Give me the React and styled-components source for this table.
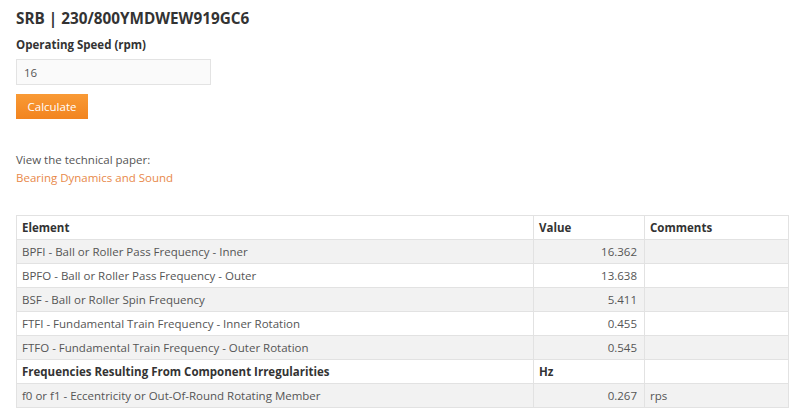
import styled, { createGlobalStyle } from 'styled-components';

const GlobalStyle = createGlobalStyle`
  body {
    margin: 0;
    background: #fff;
    font-family: "Open Sans", "Liberation Sans", sans-serif;
    color: #555;
  }
`;

const Page = styled.div`
  padding: 8px 10px 0 16px;
`;

const Title = styled.h1`
  margin: 0;
  font-size: 15.3px;
  line-height: 20px;
  font-weight: 700;
  color: #333;
`;

const Label = styled.label`
  display: block;
  margin-top: 9px;
  font-size: 11.5px;
  line-height: 16px;
  font-weight: 700;
  color: #333;
`;

const Input = styled.input`
  display: block;
  box-sizing: border-box;
  margin-top: 6px;
  width: 195px;
  height: 26px;
  padding: 0 7px;
  border: 1px solid #e3e3e3;
  background: #fafafa;
  font-family: inherit;
  font-size: 11.5px;
  color: #555;
`;

const Button = styled.button`
  display: block;
  margin-top: 9px;
  width: 72px;
  height: 25px;
  padding: 0;
  border: none;
  background: linear-gradient(#f99a35, #f2841f);
  color: #fff;
  font-family: inherit;
  font-size: 11.5px;
`;

const Paper = styled.div`
  margin-top: 32px;
  font-size: 11.5px;
  line-height: 18px;
`;

const Link = styled.a`
  display: block;
  color: #e8894a;
  text-decoration: none;
`;

const Table = styled.table`
  margin-top: 28px;
  width: 772px;
  border-collapse: collapse;
  font-size: 11.5px;
  table-layout: fixed;
`;

const Row = styled.tr`
  background: ${p => (p.$gray ? '#f2f2f2' : '#fff')};
`;

const Cell = styled.td`
  height: 23px;
  padding: 0 7px 0 5px;
  border: 1px solid #e2e2e2;
  text-align: ${p => (p.$right ? 'right' : 'left')};
  font-weight: ${p => (p.$bold ? 700 : 400)};
  color: ${p => (p.$bold ? '#333' : '#555')};
  white-space: nowrap;
  overflow: hidden;
`;

const rows = [
  ['BPFI - Ball or Roller Pass Frequency - Inner', '16.362', ''],
  ['BPFO - Ball or Roller Pass Frequency - Outer', '13.638', ''],
  ['BSF - Ball or Roller Spin Frequency', '5.411', ''],
  ['FTFI - Fundamental Train Frequency - Inner Rotation', '0.455', ''],
  ['FTFO - Fundamental Train Frequency - Outer Rotation', '0.545', ''],
];

export default function App() {
  return (
    <Page>
      <GlobalStyle />
      <Title>SRB | 230/800YMDWEW919GC6</Title>
      <Label>Operating Speed (rpm)</Label>
      <Input defaultValue="16" />
      <Button>Calculate</Button>
      <Paper>
        View the technical paper:
        <Link href="#">Bearing Dynamics and Sound</Link>
      </Paper>
      <Table>
        <colgroup>
          <col style={{ width: 517 }} />
          <col style={{ width: 111 }} />
          <col style={{ width: 144 }} />
        </colgroup>
        <tbody>
          <Row>
            <Cell $bold>Element</Cell>
            <Cell $bold>Value</Cell>
            <Cell $bold>Comments</Cell>
          </Row>
          {rows.map((r, i) => (
            <Row key={r[0]} $gray={i % 2 === 0}>
              <Cell>{r[0]}</Cell>
              <Cell $right>{r[1]}</Cell>
              <Cell>{r[2]}</Cell>
            </Row>
          ))}
          <Row>
            <Cell $bold>Frequencies Resulting From Component Irregularities</Cell>
            <Cell $bold>Hz</Cell>
            <Cell></Cell>
          </Row>
          <Row $gray>
            <Cell>f0 or f1 - Eccentricity or Out-Of-Round Rotating Member</Cell>
            <Cell $right>0.267</Cell>
            <Cell>rps</Cell>
          </Row>
        </tbody>
      </Table>
    </Page>
  );
}
